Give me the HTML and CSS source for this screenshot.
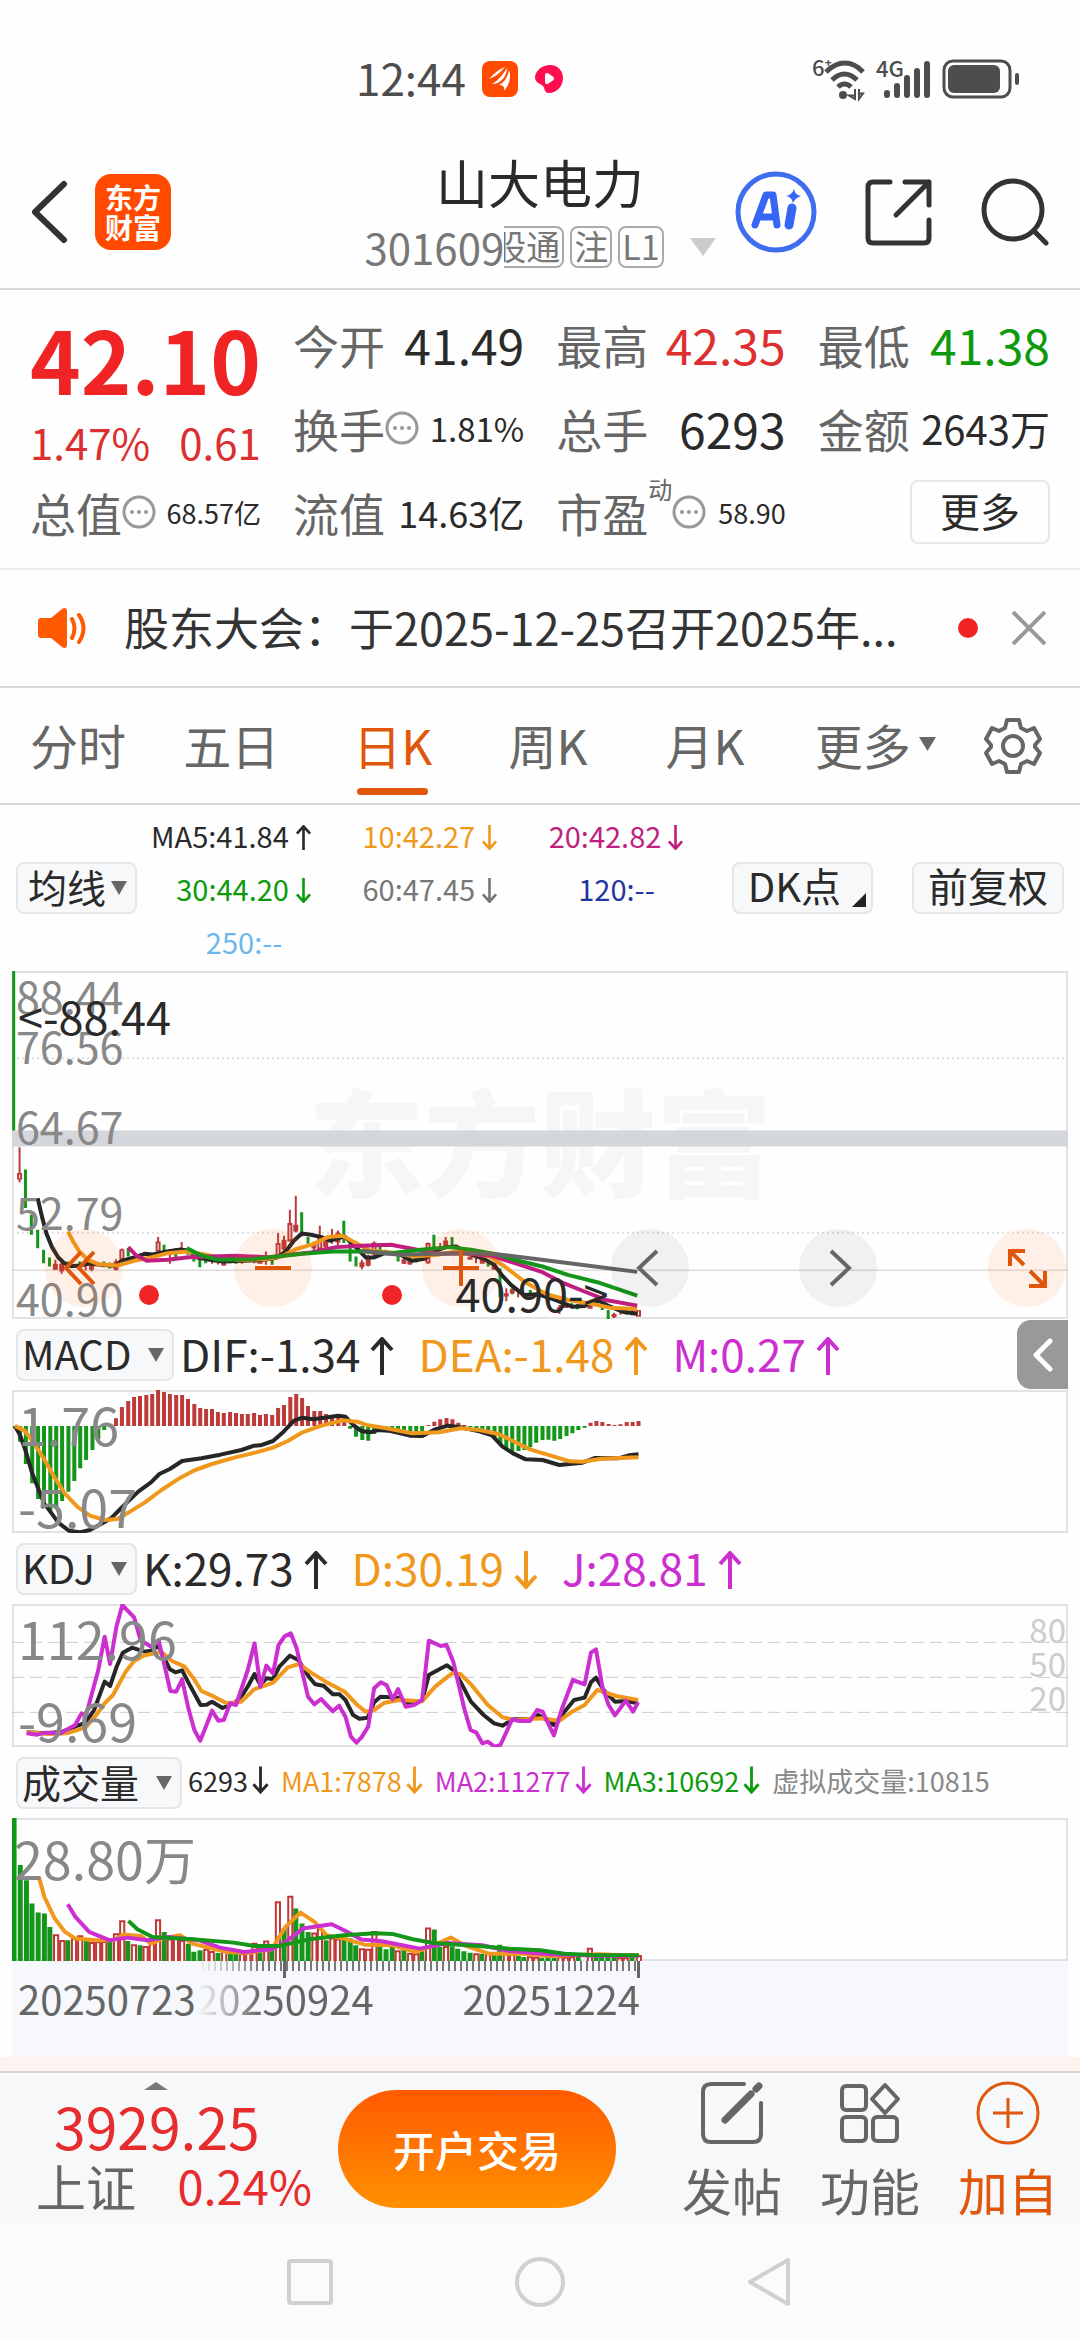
FILE: index.html
```
<!DOCTYPE html>
<html lang="zh-CN">
<head>
    <meta charset="UTF-8">
    <meta name="viewport" content="width=device-width, initial-scale=1.0">
    <title>山大电力 301609</title>
    <link rel="stylesheet" href="styles.css">
</head>
<body>
    <svg class="symbols" width="0" height="0">
        <symbol id="up" viewBox="0 0 24 38"><path d="M12 38V2M2 13L12 2L22 13"/></symbol>
        <symbol id="down" viewBox="0 0 24 38"><path d="M12 0V36M2 25L12 36L22 25"/></symbol>
        <symbol id="dots" viewBox="0 0 34 34">
            <circle cx="17" cy="17" r="15" fill="none" stroke="#999" stroke-width="3"/>
            <circle cx="10" cy="17" r="2" fill="#999"/><circle cx="17" cy="17" r="2" fill="#999"/><circle cx="24" cy="17" r="2" fill="#999"/>
        </symbol>
    </svg>

    <div class="status-bar">
        <div class="status-left">
            <span class="clock">12:44</span>
            <svg class="app-dot" width="36" height="36" viewBox="0 0 36 36">
                <rect width="36" height="36" rx="8" fill="#ff4a00"/>
                <path d="M7 18C11 14 15 9 23 6C19 11 13 16 7 18ZM10 23C17 19 21 13 25 7C25 15 19 23 10 23ZM17 24C23 21 26 15 27 9C30 17 26 26 22 30C23 26 21 24 17 24Z" fill="#fff"/>
            </svg>
            <svg class="app-dot" width="30" height="30" viewBox="0 0 30 30">
                <path d="M16 1C24 1 29 7 29 14C29 22 23 29 15 29C10 29 11 24 9 22C6 19 1 19 1 13C2 6 8 1 16 1Z" fill="#ff0d4e"/>
                <path d="M13 11L18 14.500L13 18Z" fill="#fff" stroke="#fff" stroke-width="4" stroke-linejoin="round"/>
            </svg>
        </div>
        <div class="status-right">
            <svg width="54" height="42" viewBox="0 0 54 42" fill="none" stroke="#4d4d4d">
                <path d="M14 14C26 2 40 2 51 14" stroke-width="5"/>
                <path d="M20 22C28 14 37 14 45 22" stroke-width="5"/>
                <path d="M26 29C30 25 35 25 39 29" stroke-width="5"/>
                <circle cx="31" cy="37" r="4" fill="#4d4d4d" stroke="none"/>
                <path d="M43 31V41L37 37.500H43M47 31V41L51 35.500H47" stroke-width="2"/>
                <text x="0" y="18" class="status-text">6⁺</text>
            </svg>
            <svg width="56" height="42" viewBox="0 0 56 42" fill="none" stroke="#4d4d4d" stroke-width="6" stroke-linecap="round">
                <path d="M11 37V35M21 37V28M31 37V20M41 37V13M51 37V6"/>
                <text x="0" y="19" class="status-text">4G</text>
            </svg>
            <svg width="78" height="40" viewBox="0 0 78 40">
                <rect x="2" y="2" width="66" height="36" rx="9" fill="none" stroke="#4d4d4d" stroke-width="3"/>
                <rect x="6" y="6" width="52" height="28" rx="6" fill="#4d4d4d"/>
                <rect x="73" y="14" width="4" height="12" rx="2" fill="#4d4d4d"/>
            </svg>
        </div>
    </div>

    <header class="header">
        <div class="header-left">
            <button class="icon-button" aria-label="返回">
                <svg width="38" height="64" viewBox="0 0 38 64" fill="none" stroke="#333" stroke-width="6" stroke-linecap="round" stroke-linejoin="round"><path d="M33 4L4 32L33 60"/></svg>
            </button>
            <a class="brand" href="#">东方<br>财富</a>
        </div>
        <div class="stock">
            <h1 class="stock-name">山大电力</h1>
            <div class="stock-code">
                <span>301609</span><span class="tag tag-cut">股通</span><span class="tag">注</span><span class="tag">L1</span>
                <svg class="stock-caret" width="26" height="18" viewBox="0 0 26 18"><path d="M0 0H26L13 18Z" fill="#ccc"/></svg>
            </div>
        </div>
        <div class="header-right">
            <button class="icon-button" aria-label="AI">
                <svg width="82" height="82" viewBox="0 0 82 82">
                    <circle cx="41" cy="41" r="38" fill="none" stroke="#3f6df0" stroke-width="5"/>
                    <path d="M20 54L31 24H38L42 54M24 46H39" fill="none" stroke="#3566f5" stroke-width="7" stroke-linecap="round" stroke-linejoin="round"/>
                    <path d="M57 37L54 54" stroke="#3566f5" stroke-width="9" stroke-linecap="round"/>
                    <path d="M59 18Q60 24 66 25Q60 27 58 32Q57 26 51 25Q57 24 59 18Z" fill="#3566f5"/>
                </svg>
            </button>
            <button class="icon-button" aria-label="分享">
                <svg width="68" height="68" viewBox="0 0 68 68" fill="none" stroke="#333" stroke-width="5" stroke-linecap="round" stroke-linejoin="round">
                    <path d="M25 4H8Q3 4 3 9V60Q3 65 8 65H59Q64 65 64 60V42M40 4H64V27M64 4L31 37"/>
                </svg>
            </button>
            <button class="icon-button" aria-label="搜索">
                <svg width="68" height="68" viewBox="0 0 68 68" fill="none" stroke="#333" stroke-width="5" stroke-linecap="round"><circle cx="32" cy="32" r="29"/><path d="M53 53L65 65"/></svg>
            </button>
        </div>
    </header>

    <section class="quote">
        <div class="quote-main">
            <div class="price">42.10</div>
            <div class="change"><span>1.47%</span><span>0.61</span></div>
        </div>
        <div class="cell"><span class="label">今开</span><span class="value">41.49</span></div>
        <div class="cell"><span class="label">最高</span><span class="value up">42.35</span></div>
        <div class="cell"><span class="label">最低</span><span class="value down">41.38</span></div>
        <div class="cell"><span class="label">换手<svg width="34" height="34"><use href="#dots"/></svg></span><span class="value value-r">1.81%</span></div>
        <div class="cell"><span class="label">总手</span><span class="value">6293</span></div>
        <div class="cell"><span class="label">金额</span><span class="value value-l">2643万</span></div>
        <div class="cell"><span class="label">总值<svg width="34" height="34"><use href="#dots"/></svg></span><span class="value value-s">68.57亿</span></div>
        <div class="cell"><span class="label">流值</span><span class="value value-m">14.63亿</span></div>
        <div class="cell"><span class="label">市盈<sup>动</sup><svg width="34" height="34"><use href="#dots"/></svg></span><span class="value value-s">58.90</span></div>
        <div class="cell cell-end"><button class="more-button">更多</button></div>
    </section>

    <section class="notice">
        <svg width="50" height="42" viewBox="0 0 50 42">
            <path d="M3 11H13L24 2Q29 -1 29 5V37Q29 43 24 40L13 31H3Q0 31 0 28V14Q0 11 3 11Z" fill="#ff5a00"/>
            <path d="M34 12Q39 21 34 31M41 8Q50 21 41 35" fill="none" stroke="#ff5a00" stroke-width="4" stroke-linecap="round"/>
        </svg>
        <a class="notice-text" href="#">股东大会：于2025-12-25召开2025年...</a>
        <span class="red-dot"></span>
        <button class="icon-button" aria-label="关闭">
            <svg width="34" height="34" viewBox="0 0 34 34" stroke="#999" stroke-width="4"><path d="M1 1L33 33M33 1L1 33"/></svg>
        </button>
    </section>

    <nav class="tabs">
        <button class="tab">分时</button>
        <button class="tab">五日</button>
        <button class="tab active">日K</button>
        <button class="tab">周K</button>
        <button class="tab">月K</button>
        <button class="tab">更多<svg width="17" height="14" viewBox="0 0 17 14"><path d="M0 0H17L8.500 14Z" fill="#666"/></svg></button>
        <button class="icon-button" aria-label="设置">
            <svg width="58" height="58" viewBox="0 0 58 58" fill="none" stroke="#666" stroke-width="4" stroke-linejoin="round">
                <path d="M23 3H35L37 11L43 14L50 11L56 22L51 28V30L56 36L50 47L43 44L37 47L35 55H23L21 47L15 44L8 47L2 36L7 30V28L2 22L8 11L15 14L21 11Z"/>
                <circle cx="29" cy="29" r="10"/>
            </svg>
        </button>
    </nav>

    <section class="ma-bar">
        <label class="picker">
            <select class="picker-tight" aria-label="均线"><option>均线</option></select>
            <svg width="16" height="14" viewBox="0 0 16 14"><path d="M0 0H16L8 14Z" fill="#666"/></svg>
        </label>
        <div class="ma-values">
            <span class="ma5">MA5:41.84<svg class="arrow"><use href="#up"/></svg></span>
            <span class="c-orange">10:42.27<svg class="arrow"><use href="#down"/></svg></span>
            <span class="c-magenta">20:42.82<svg class="arrow"><use href="#down"/></svg></span>
            <span class="c-green">30:44.20<svg class="arrow"><use href="#down"/></svg></span>
            <span class="c-gray">60:47.45<svg class="arrow"><use href="#down"/></svg></span>
            <span class="c-navy">120:--</span>
            <span class="c-sky">250:--</span>
        </div>
        <div class="ma-buttons">
            <button class="chip chip-corner">DK点</button>
            <button class="chip">前复权</button>
        </div>
    </section>

    <main class="charts">
        <div class="chart chart-price">
            <div class="watermark">东方财富</div>
            <svg class="plot" viewBox="30 36 2508 1041" preserveAspectRatio="none">
                <path d="M30 297H2538M30 819H2538" stroke="#ddd" stroke-width="2" stroke-dasharray="2 3"/>
                <path d="M30 931H2538" stroke="#ccc" stroke-width="1"/>
                <rect x="30" y="513" width="2508" height="48" fill="#d3d6db"/>
                <path class="s-green" stroke-width="3" d="M34 36V513M62 630V745M76 765V825M91 810V865M105 870V910M119 893V920M162 905V925M191 905V930M248 905V922M262 908V926M306 865V890M391 855V880M419 865V895M448 865V885M462 880V905M476 895V922M490 898V910M548 893V910M562 896V912M648 890V915M718 758V830M733 832V852M818 783V850M833 850V905M847 890V920M904 850V880M918 870V885M947 885V905M990 888V908M1032 825V880M1075 832V865M1090 865V885M1161 900V920M1189 925V1012M1218 985V1003M1261 990V1010M1304 1008V1035M1359 1030V1045M1373 1032V1048M1418 1018V1035M1432 1022V1050M1446 1050V1078M1490 1048V1064"/>
                <path class="s-red" stroke-width="2" d="M48 563V668M133 900V930M148 905V942M205 905V932M219 905V934M277 898V932M291 866V915M377 832V878M405 878V912M433 847V870M505 895V912M519 896V914M533 900V918M576 893V912M605 885V910M633 875V915M662 820V895M676 828V885M690 750V845M704 708V818M747 845V875M761 798V878M775 830V870M790 808V852M804 812V858M861 900V928M876 885V920M890 845V895M961 885V912M975 890V915M1018 848V912M1047 850V872M1060 832V865M1132 892V910M1204 985V1024M1232 988V1012M1330 1035V1062M1460 1058V1074M1475 1046V1064"/>
                <path class="s-red" stroke-width="5" d="M48 640V660M133 912V930M148 912V935M219 915V930M277 905V930M291 868V900M377 845V875M533 905V917M605 892V903M619 898V912M662 850V890M676 840V870M690 790V845M704 795V815M747 852V866M761 826V870M775 842V862M804 818V848M861 907V922M876 893V918M890 848V885M961 898V912M975 900V914M1018 850V910M1060 842V858M1118 890V900M1147 898V912M1175 910V930M1204 1000V1010M1218 988V1000M1330 1042V1052M1345 1030V1044M1403 1030V1046M1460 1062V1072M1504 1050V1066M1518 1050V1070"/>
                <path stroke="#fff" stroke-width="1" d="M48 645V656M291 873V895M377 850V870M662 855V885M690 796V838M761 832V863M890 853V880M1018 855V905M1518 1054V1066"/>
                <polyline class="s-black" points="91,716 101,770 112,822 125,862 140,893 155,911 170,919 190,917 215,911 240,915 275,918 290,903 320,893 345,882 365,884 395,876 430,869 450,873 470,893 500,900 530,905 580,903 620,901 660,893 680,875 700,842 718,821 740,825 765,832 785,843 820,830 845,860 870,893 890,893 915,880 945,880 980,903 1010,897 1035,873 1060,862 1085,860 1110,880 1150,897 1175,915 1195,948 1215,975 1245,1005 1280,1003 1320,1020 1360,1040 1390,1038 1420,1020 1445,1037 1480,1055 1515,1061"/>
                <polyline class="s-orange" points="163,815 175,845 190,875 210,900 235,913 280,917 320,903 360,893 400,880 445,875 485,883 520,893 570,900 630,898 670,890 705,868 745,853 780,832 815,828 840,845 880,872 930,878 985,890 1040,885 1085,875 1120,880 1165,890 1200,920 1250,968 1300,1003 1350,1020 1400,1030 1450,1043 1515,1047"/>
                <polyline class="s-magenta" points="306,862 325,887 350,903 400,900 450,892 500,890 560,888 640,892 690,885 740,878 800,862 860,858 930,855 980,867 1040,882 1100,880 1170,888 1230,912 1290,937 1340,970 1400,1000 1440,1020 1515,1037"/>
                <polyline class="s-green" points="445,865 480,887 520,900 600,898 660,890 720,882 790,875 870,875 930,880 1000,870 1070,862 1120,870 1180,883 1230,902 1290,920 1350,945 1420,967 1515,1007"/>
                <polyline class="s-gray" points="860,873 950,885 1050,882 1130,880 1180,883 1340,908 1515,936"/>
            </svg>
            <div class="price-axis">
                <span>88.44</span><span>76.56</span><span>64.67</span><span>52.79</span><span>40.90</span>
            </div>
            <span class="mark mark-high">&lt;-88.44</span>
            <div class="chart-tools">
                <button class="tool" aria-label="更早"><svg width="40" height="40" viewBox="0 0 40 40"><path d="M17 4L2 20L17 36M30 4L15 20L30 36"/></svg></button>
                <button class="tool" aria-label="缩小"><svg width="40" height="40" viewBox="0 0 40 40"><path d="M2 20H38"/></svg></button>
                <button class="tool" aria-label="放大"><svg width="40" height="40" viewBox="0 0 40 40"><path d="M2 20H38M20 2V38"/></svg></button>
                <button class="tool tool-gray" aria-label="上一个"><svg width="40" height="40" viewBox="0 0 40 40"><path d="M27 3L9 20L27 37"/></svg></button>
                <button class="tool tool-gray" aria-label="下一个"><svg width="40" height="40" viewBox="0 0 40 40"><path d="M13 3L31 20L13 37"/></svg></button>
                <button class="tool" aria-label="全屏"><svg width="40" height="40" viewBox="0 0 40 40"><path d="M3 18V3H18M3 3L17 17M38 23V38H22M38 38L23 23"/></svg></button>
            </div>
            <i class="red-dot event event-1"></i>
            <i class="red-dot event event-2"></i>
            <span class="mark mark-low">40.90-&gt;</span>
        </div>

        <div class="indicator">
            <label class="picker">
                <select aria-label="指标"><option>MACD</option></select>
                <svg width="16" height="14" viewBox="0 0 16 14"><path d="M0 0H16L8 14Z" fill="#666"/></svg>
            </label>
            <span>DIF:-1.34<svg class="arrow"><use href="#up"/></svg></span>
            <span class="c-orange">DEA:-1.48<svg class="arrow"><use href="#up"/></svg></span>
            <span class="c-purple">M:0.27<svg class="arrow"><use href="#up"/></svg></span>
            <button class="drawer" aria-label="展开">
                <svg width="20" height="34" viewBox="0 0 20 34" fill="none" stroke="#fff" stroke-width="5" stroke-linecap="round" stroke-linejoin="round"><path d="M17 3L3 17L17 31"/></svg>
            </button>
        </div>
        <div class="chart chart-sub">
            <svg class="plot" viewBox="30 240 2508 429" preserveAspectRatio="none">
                <path class="s-green" stroke-width="4" d="M37 348V355M49 348V395M63 348V462M78 348V520M92 348V567M106 348V590M121 348V605M135 348V590M149 348V573M164 348V545M178 348V513M192 348V475M206 348V450M221 348V420M235 348V388M249 348V360M263 348V352M833 348V356M847 348V380M862 348V390M876 348V392M890 348V372M904 348V366M919 348V366M933 348V368M947 348V372M961 348V375M976 348V376M990 348V376M1004 348V368M1119 348V351M1133 348V356M1147 348V366M1161 348V375M1176 348V384M1190 348V405M1204 348V420M1218 348V425M1233 348V423M1247 348V420M1261 348V412M1275 348V398M1290 348V390M1304 348V389M1318 348V392M1332 348V387M1347 348V378M1361 348V370M1375 348V360M1390 348V353"/>
                <path class="s-red" stroke-width="4" d="M277 348V325M291 348V291M306 348V273M320 348V261M334 348V258M349 348V255M363 348V252M377 348V240M391 348V246M405 348V252M420 348V255M434 348V255M448 348V267M463 348V282M477 348V294M491 348V297M505 348V297M519 348V306M533 348V309M548 348V306M562 348V309M576 348V312M590 348V312M605 348V309M619 348V315M633 348V312M648 348V315M662 348V294M676 348V285M691 348V261M705 348V252M719 348V264M733 348V288M748 348V303M762 348V303M776 348V312M790 348V318M805 348V320M819 348V325M1019 348V345M1033 348V335M1047 348V328M1062 348V324M1076 348V328M1090 348V338M1104 348V345M1404 348V338M1418 348V333M1432 348V336M1447 348V342M1461 348V345M1475 348V343M1490 348V336M1504 348V336M1518 348V333"/>
                <polyline class="s-black" points="37,348 49,375 63,425 78,490 92,535 106,580 121,605 140,638 165,662 190,667 215,660 240,643 265,625 285,600 305,575 330,545 360,517 380,492 405,477 434,453 480,445 525,434 575,420 605,407 620,406 650,393 675,365 700,332 720,323 745,328 780,322 805,317 822,320 840,345 860,363 880,367 900,360 930,363 975,377 1005,378 1035,358 1065,347 1095,352 1140,364 1170,376 1195,410 1220,430 1250,448 1290,450 1330,465 1385,458 1415,444 1470,445 1495,436 1518,433"/>
                <polyline class="s-orange" points="37,348 60,362 80,395 105,445 130,500 155,550 185,590 215,617 250,630 280,627 310,605 345,578 385,540 430,503 465,480 505,462 560,442 610,427 650,413 685,393 720,367 765,347 815,331 850,335 875,346 920,355 980,370 1045,367 1095,355 1140,360 1185,372 1220,393 1260,418 1310,437 1355,454 1385,455 1430,446 1518,442"/>
            </svg>
            <div class="sub-axis"><span>1.76</span><span>-5.07</span></div>
        </div>

        <div class="indicator">
            <label class="picker">
                <select aria-label="指标"><option>KDJ</option></select>
                <svg width="16" height="14" viewBox="0 0 16 14"><path d="M0 0H16L8 14Z" fill="#666"/></svg>
            </label>
            <span>K:29.73<svg class="arrow"><use href="#up"/></svg></span>
            <span class="c-orange">D:30.19<svg class="arrow"><use href="#down"/></svg></span>
            <span class="c-purple">J:28.81<svg class="arrow"><use href="#up"/></svg></span>
        </div>
        <div class="chart chart-sub">
            <svg class="plot" viewBox="30 222 2508 429" preserveAspectRatio="none">
                <path d="M30 337H2538M30 442H2538M30 547H2538" stroke="#ccc" stroke-width="1" stroke-dasharray="12 6"/>
                <polyline class="s-black" points="65,607 110,610 150,605 180,590 205,578 225,540 250,455 263,468 278,412 293,368 315,353 345,365 360,362 378,348 392,385 405,418 418,427 434,421 450,460 478,525 492,524 505,515 530,534 560,518 580,490 592,465 606,432 620,465 634,445 650,447 665,410 690,377 710,390 735,440 750,463 770,467 792,493 808,493 822,510 840,555 855,566 875,563 890,517 905,500 930,502 950,503 970,522 1004,512 1020,435 1045,418 1063,406 1080,422 1098,462 1120,515 1150,555 1175,580 1195,587 1220,568 1260,568 1280,555 1300,570 1317,585 1340,548 1365,510 1390,503 1405,457 1417,443 1435,480 1462,515 1490,513 1517,520"/>
                <polyline class="s-orange" points="65,607 120,612 160,610 205,592 230,555 250,520 270,495 300,425 320,393 345,376 385,366 410,393 440,410 460,443 480,483 510,500 540,520 575,515 605,478 650,458 685,412 712,402 740,428 775,455 820,485 850,525 870,545 890,540 915,518 950,510 1004,514 1035,470 1075,430 1095,432 1120,463 1160,525 1195,562 1225,570 1290,565 1330,573 1360,545 1390,525 1420,480 1465,498 1517,510"/>
                <polyline class="s-purple" points="65,610 90,614 110,608 145,610 180,585 195,550 206,555 235,420 250,320 263,402 278,290 292,225 320,262 335,330 360,350 378,330 392,405 406,483 420,485 434,448 448,530 463,600 477,632 492,585 505,542 520,572 533,570 548,520 562,525 590,420 606,340 620,470 634,407 650,430 663,345 678,318 692,310 706,355 733,500 748,523 764,507 792,544 807,527 822,560 835,620 848,638 860,622 876,590 890,475 906,457 920,466 934,508 947,477 965,530 985,525 1004,510 1020,332 1048,348 1062,345 1078,395 1105,540 1119,600 1133,608 1147,640 1160,635 1176,650 1190,645 1218,568 1235,573 1260,573 1277,540 1290,545 1317,616 1335,540 1362,450 1390,463 1405,368 1417,358 1432,470 1447,525 1462,556 1488,512 1505,545 1517,517"/>
            </svg>
            <div class="sub-axis"><span>112.96</span><span>-9.69</span></div>
            <div class="right-axis"><span>80</span><span>50</span><span>20</span></div>
        </div>

        <div class="indicator indicator-volume">
            <label class="picker">
                <select class="picker-tight" aria-label="指标"><option>成交量</option></select>
                <svg width="16" height="14" viewBox="0 0 16 14"><path d="M0 0H16L8 14Z" fill="#666"/></svg>
            </label>
            <span>6293<svg class="arrow"><use href="#down"/></svg></span>
            <span class="c-orange">MA1:7878<svg class="arrow"><use href="#down"/></svg></span>
            <span class="c-purple">MA2:11277<svg class="arrow"><use href="#down"/></svg></span>
            <span class="c-green">MA3:10692<svg class="arrow"><use href="#down"/></svg></span>
            <span class="c-light">虚拟成交量:10815</span>
        </div>
        <div class="chart chart-sub">
            <svg class="plot" viewBox="18 204 1533 428" preserveAspectRatio="none">
                <path class="s-green" stroke-width="5" d="M21 632V204M30 632V345M39 632V390M47 632V460M56 632V487M65 632V490M73 632V530M99 632V570M126 632V570M160 632V570M186 632V572M204 632V585M239 632V545M274 632V580M282 632V604M291 632V600M317 632V608M335 632V605M343 632V608M378 632V592M395 632V585M413 632V535M430 632V475M439 632V520M448 632V545M474 632V570M500 632V555M509 632V565M517 632V585M552 632V585M561 632V597M570 632V590M587 632V600M613 632V600M631 632V538M639 632V590M657 632V588M665 632V595M674 632V603M683 632V607M700 632V610M718 632V607M726 632V583M753 632V617M761 632V620M787 632V622M796 632V620M805 632V622M840 632V615M866 632V612M874 632V610M883 632V608M892 632V616M918 632V620"/>
                <path class="bars-red" d="M79 632V555H85V632M88 632V572H94V632M105 632V567H111V632M114 632V558H120V632M131 632V578H137V632M140 632V576H146V632M149 632V575H155V632M166 632V552H172V632M175 632V513H181V632M192 632V585H198V632M209 632V590H215V632M218 632V572H224V632M227 632V510H233V632M244 632V568H250V632M253 632V565H259V632M262 632V572H268V632M297 632V598H303V632M305 632V605H311V632M323 632V605H329V632M349 632V612H355V632M358 632V608H364V632M367 632V580H373V632M384 632V574H390V632M401 632V456H407V632M419 632V440H425V632M454 632V550H460V632M462 632V537H468V632M480 632V565H486V632M488 632V568H494V632M523 632V597H529V632M532 632V598H538V632M541 632V545H547V632M575 632V603H581V632M593 632V610H599V632M602 632V612H608V632M619 632V535H625V632M645 632V590H651V632M689 632V612H695V632M706 632V612H712V632M732 632V612H738V632M741 632V612H747V632M767 632V621H773V632M776 632V622H782V632M811 632V621H817V632M819 632V622H825V632M828 632V621H834V632M854 632V595H860V632M897 632V624H903V632M906 632V624H912V632M925 632V617H931V632"/>
                <polyline class="s-orange" points="57,380 65,440 80,505 95,545 110,565 140,570 165,570 180,553 205,557 220,580 240,563 262,555 280,580 300,590 330,605 360,608 395,597 415,530 437,487 457,515 475,555 500,565 530,583 570,585 605,605 630,585 655,562 675,585 710,610 760,610 800,617 870,612 928,616"/>
                <polyline class="s-purple" points="99,462 110,500 130,545 160,570 185,562 215,570 245,560 290,570 320,592 355,605 395,597 415,575 440,535 482,522 500,540 525,568 555,573 610,595 650,578 700,585 740,602 800,612 870,616 928,616"/>
                <polyline class="s-green" points="187,512 200,537 222,560 280,567 340,577 370,587 405,587 450,567 500,555 545,549 570,551 600,567 630,578 700,588 740,595 785,600 820,610 860,614 928,615"/>
            </svg>
            <div class="sub-axis volume-axis"><span>28.80万</span></div>
        </div>
        <div class="dates">
            <div class="date-range">
                <div class="ticks"></div>
                <span>20250924</span>
                <span>20251224</span>
            </div>
            <span class="date-start">20250723</span>
        </div>
    </main>

    <div class="divider"></div>

    <footer class="footer">
        <div class="index">
            <svg class="index-caret" width="24" height="8" viewBox="0 0 24 8"><path d="M0 8H24L12 0Z" fill="#777"/></svg>
            <div class="index-value">3929.25</div>
            <div class="index-row"><span class="index-name">上证</span><span class="index-change">0.24%</span></div>
        </div>
        <button class="trade">开户交易</button>
        <div class="actions">
            <button class="action">
                <svg width="64" height="64" viewBox="0 0 64 64" fill="none" stroke="#666" stroke-width="4" stroke-linecap="round">
                    <path d="M44 3H11Q3 3 3 11V53Q3 61 11 61H53Q61 61 61 53V22"/>
                    <path d="M25 39L51 13" stroke-width="7"/><path d="M56 8L59 5" stroke-width="7"/>
                </svg>
                发帖
            </button>
            <button class="action">
                <svg width="64" height="64" viewBox="0 0 64 64" fill="none" stroke="#666" stroke-width="4" stroke-linejoin="round">
                    <rect x="4" y="5" width="24" height="24" rx="4"/><rect x="4" y="36" width="24" height="24" rx="4"/><rect x="35" y="36" width="24" height="24" rx="4"/>
                    <path d="M47 4L60 18L47 32L34 18Z"/>
                </svg>
                功能
            </button>
            <button class="action action-add">
                <svg width="64" height="64" viewBox="0 0 64 64" fill="none" stroke="#e0560b" stroke-width="3"><circle cx="32" cy="32" r="30"/><path d="M17 32H47M32 17V47"/></svg>
                加自
            </button>
        </div>
    </footer>

    <div class="system-nav">
        <button class="icon-button" aria-label="最近任务"><svg width="50" height="50" viewBox="0 0 50 50"><rect x="4" y="4" width="42" height="42" rx="2"/></svg></button>
        <button class="icon-button" aria-label="主屏幕"><svg width="50" height="50" viewBox="0 0 50 50"><circle cx="25" cy="25" r="23"/></svg></button>
        <button class="icon-button" aria-label="系统返回"><svg width="50" height="50" viewBox="0 0 50 50"><path d="M43 3V47L5 25Z"/></svg></button>
    </div>
</body>
</html>
```
FILE: styles.css
```
* {
    box-sizing: border-box;
}
body {
    margin: 0;
    font-family: "Noto Sans CJK SC", "Noto Sans", sans-serif;
    line-height: 1;
    color: #2a2a2a;
    background-color: #fefefe;
}
svg {
    display: block;
    flex: none;
}
button, select {
    font: inherit;
    color: inherit;
    border: none;
    background: none;
    padding: 0;
    margin: 0;
    cursor: pointer;
}
a {
    color: inherit;
    text-decoration: none;
}
.symbols {
    position: absolute;
}

/* status bar */
.status-bar {
    display: flex;
    justify-content: space-between;
    align-items: center;
    height: 136px;
    padding: 22px 60px 0 356px;
}
.status-left, .status-right {
    display: flex;
    align-items: center;
}
.status-left {
    gap: 16px;
}
.status-right {
    gap: 10px;
}
.status-right svg {
    overflow: visible;
}
.clock {
    padding-bottom: 4px;
    font-size: 44px;
    color: #4d4d4d;
}
.status-text {
    font-size: 22px;
    font-weight: 500;
    fill: #4d4d4d;
    stroke: none;
}

/* header */
.header {
    display: grid;
    grid-template-columns: 1fr auto 1fr;
    align-items: center;
    height: 154px;
    padding: 0 31px;
    border-bottom: 2px solid #d8d8d8;
}
.header-left, .header-right {
    display: flex;
    align-items: center;
}
.header-left {
    gap: 26px;
}
.header-right {
    justify-content: flex-end;
    gap: 48px;
}
.brand {
    width: 76px;
    padding: 8px 0;
    border-radius: 16px;
    background-color: #ff4a00;
    color: #fff;
    font-size: 28px;
    font-weight: bold;
    line-height: 30px;
    text-align: center;
}
.stock-name {
    margin: 0 0 18px;
    font-size: 52px;
    font-weight: normal;
    text-align: center;
}
.stock-code {
    display: flex;
    align-items: center;
    font-size: 42px;
    color: #777;
}
.tag {
    height: 42px;
    margin-right: 6px;
    padding: 0 2px;
    border: 2px solid #aaa;
    border-radius: 8px;
    font-size: 34px;
    line-height: 36px;
    text-align: center;
    white-space: nowrap;
}
.tag-cut {
    display: flex;
    justify-content: flex-end;
    width: 60px;
    overflow: hidden;
    border-left: none;
    border-radius: 0 8px 8px 0;
}
.stock-caret {
    margin-left: 20px;
}

/* quote */
.quote {
    display: grid;
    grid-template-columns: 225fr 232fr 230fr 233fr;
    grid-auto-rows: 84px;
    column-gap: 32px;
    padding: 12px 30px 14px;
    border-bottom: 2px solid #eee;
}
.quote-main {
    grid-row: span 2;
}
.price {
    font-size: 86px;
    font-weight: bold;
    line-height: 112px;
    color: #f02424;
    white-space: nowrap;
}
.change {
    display: flex;
    justify-content: space-between;
    font-size: 42px;
    line-height: 56px;
    color: #dc2f2f;
}
.cell {
    display: flex;
    justify-content: space-between;
    align-items: center;
    white-space: nowrap;
}
.cell-end {
    justify-content: flex-end;
}
.label {
    display: flex;
    align-items: center;
    font-size: 46px;
    color: #666;
}
.label sup {
    align-self: flex-start;
    margin-top: -12px;
    font-size: 24px;
    line-height: 24px;
}
.value {
    font-size: 48px;
}
.value-l {
    font-size: 40px;
}
.value-m {
    font-size: 36px;
}
.value-r {
    font-size: 33px;
}
.value-s {
    font-size: 27px;
}
.up {
    color: #dc2f2f;
}
.down {
    color: #0d9a0d;
}
.more-button {
    padding: 8px 28px 12px;
    border: 2px solid #e6e8e8;
    border-radius: 8px;
    font-size: 40px;
}

/* notice */
.notice {
    display: flex;
    align-items: center;
    height: 118px;
    padding: 0 34px 0 38px;
    border-bottom: 2px solid #d8d8d8;
}
.notice-text {
    flex: 1;
    margin-left: 36px;
    padding-bottom: 4px;
    font-size: 45px;
    color: #333;
    white-space: nowrap;
}
.red-dot {
    width: 20px;
    height: 20px;
    border-radius: 50%;
    background-color: #f02424;
}
.notice .red-dot {
    margin-right: 34px;
}

/* tabs */
.tabs {
    display: grid;
    grid-template-columns: 153fr 170fr 155fr 157fr 149fr 169fr 66fr;
    align-items: stretch;
    justify-items: start;
    height: 117px;
    padding: 0 30px;
    border-bottom: 2px solid #d8d8d8;
}
.tab {
    display: flex;
    align-items: center;
    gap: 8px;
    padding-bottom: 4px;
    font-size: 48px;
    color: #666;
    white-space: nowrap;
}
.tab.active {
    position: relative;
    color: #e0560b;
}
.tab.active::after {
    content: "";
    position: absolute;
    left: 4px;
    right: 4px;
    bottom: 8px;
    height: 7px;
    border-radius: 4px;
    background-color: #e0560b;
}

/* moving averages */
.ma-bar {
    display: flex;
    align-items: center;
    height: 166px;
    padding: 0 16px;
}
.ma-values {
    display: grid;
    grid-template-columns: repeat(3, 1fr);
    grid-auto-rows: 53px;
    flex: 1;
    align-items: center;
    justify-items: center;
    margin: 0 22px 0 14px;
    font-size: 29px;
    line-height: 40px;
    white-space: nowrap;
}
.ma5 {
    justify-self: start;
}
.ma-buttons {
    display: flex;
    gap: 39px;
}
.chip, .picker {
    height: 52px;
    border: 2px solid #e4e6ea;
    border-radius: 8px;
    background-color: #f7f8fa;
    font-size: 40px;
}
.chip {
    position: relative;
    padding: 0 14px 6px;
    line-height: 40px;
    white-space: nowrap;
}
.chip-corner {
    padding-right: 30px;
}
.chip-corner::after {
    content: "";
    position: absolute;
    right: 5px;
    bottom: 5px;
    border-left: 14px solid transparent;
    border-bottom: 14px solid #222;
}
.picker {
    display: flex;
    align-items: center;
    flex: none;
    padding: 0 8px 0 4px;
}
.picker select {
    appearance: none;
    height: 48px;
    padding: 0 16px 4px 0;
    line-height: 44px;
}
.picker select.picker-tight {
    font-size: 39px;
}
.ma-bar .picker select {
    padding-right: 4px;
    padding-left: 6px;
}
.arrow {
    display: inline-block;
    width: 17px;
    height: 25px;
    margin-left: 6px;
    vertical-align: -2px;
    fill: none;
    stroke: currentColor;
    stroke-width: 4;
}
.c-orange { color: #f0981c; }
.c-magenta { color: #c01f80; }
.c-green { color: #0d9a0d; }
.c-gray { color: #777; }
.c-navy { color: #2236a0; }
.c-sky { color: #6db8ea; }
.c-purple { color: #cc2fcf; }
.c-light { color: #888; }

/* charts */
.charts {
    margin: 0 12px;
}
.chart {
    position: relative;
    box-shadow: inset 0 0 0 2px #e2e2e2;
}
.chart-price {
    height: 348px;
}
.chart-sub {
    height: 143px;
}
.plot {
    width: 100%;
    height: 100%;
    position: relative;
}
.plot path, .plot polyline {
    fill: none;
    vector-effect: non-scaling-stroke;
}
.plot polyline {
    stroke-width: 4px;
    stroke-linejoin: round;
}
.s-green { stroke: #14961a; }
.s-red { stroke: #bd3a3a; }
.s-black { stroke: #262626; }
.s-orange { stroke: #f0981c; }
.s-magenta { stroke: #c01f80; }
.s-purple { stroke: #cc2fcf; }
.s-gray { stroke: #666; }
.plot .bars-red {
    fill: #fff;
    stroke: #c23636;
    stroke-width: 2px;
}
.watermark {
    position: absolute;
    top: 108px;
    left: 0;
    right: 0;
    text-align: center;
    font-size: 116px;
    font-weight: 900;
    color: #f6f6f6;
}
.price-axis {
    position: absolute;
    top: 0;
    bottom: 0;
    left: 4px;
    display: grid;
    grid-template-rows: 46px 50px 80px 86px 1fr;
    align-items: end;
    font-size: 43px;
    color: #888;
}
.mark {
    position: absolute;
    font-size: 45px;
}
.mark-high {
    top: 22px;
    left: 6px;
}
.mark-low {
    left: 42%;
    bottom: 4px;
}
.chart-tools {
    position: absolute;
    left: 33px;
    right: 2px;
    bottom: 12px;
    display: flex;
    justify-content: space-between;
}
.tool {
    display: flex;
    align-items: center;
    justify-content: center;
    width: 78px;
    height: 78px;
    border-radius: 50%;
    background-color: rgba(255, 90, 0, 0.09);
}
.tool svg {
    fill: none;
    stroke: #e0560b;
    stroke-width: 4;
}
.tool-gray {
    background-color: rgba(0, 0, 0, 0.05);
}
.tool-gray svg {
    stroke: #666;
}
.event {
    position: absolute;
    bottom: 14px;
}
.event-1 {
    left: 12%;
}
.event-2 {
    left: 35%;
}
.indicator {
    position: relative;
    display: flex;
    align-items: center;
    gap: 24px;
    height: 71px;
    padding-left: 4px;
    font-size: 44px;
    white-space: nowrap;
}
.indicator .picker {
    margin-right: -18px;
}
.indicator > span {
    padding-bottom: 4px;
    line-height: 50px;
}
.indicator .arrow {
    width: 24px;
    height: 38px;
    margin-left: 10px;
    vertical-align: -3px;
}
.drawer {
    position: absolute;
    top: 1px;
    right: 0;
    display: flex;
    align-items: center;
    justify-content: center;
    width: 51px;
    height: 69px;
    border-radius: 14px 0 0 14px;
    background-color: #999;
}
.indicator-volume {
    gap: 12px;
    font-size: 27px;
}
.indicator-volume .picker {
    margin-right: -6px;
}
.indicator-volume .arrow {
    width: 17px;
    height: 30px;
    margin-left: 4px;
}
.sub-axis {
    position: absolute;
    top: 8px;
    left: 6px;
    display: flex;
    flex-direction: column;
    gap: 30px;
    font-size: 52px;
    color: #888;
}
.sub-axis.volume-axis {
    top: 14px;
    left: 2px;
}
.right-axis {
    position: absolute;
    top: 8px;
    right: 2px;
    font-size: 33px;
    line-height: 34px;
    color: #ccc;
}
.right-axis span {
    display: block;
}
.dates {
    position: relative;
    height: 96px;
    background-color: #f7f8fb;
    font-size: 40px;
    color: #666;
}
.date-range {
    display: flex;
    flex-wrap: wrap;
    align-content: flex-start;
    justify-content: space-between;
    width: 628px;
    padding-left: 184px;
    mask-image: linear-gradient(to right, transparent 186px, #000 250px);
}
.ticks {
    width: 100%;
    height: 17px;
    background:
        linear-gradient(#666, #666) 87px 0 / 3px 100% no-repeat,
        linear-gradient(#666, #666) 100% 0 / 3px 100% no-repeat,
        repeating-linear-gradient(to right, #777 0 2px, transparent 2px 6px) 0 0 / 100% 10px no-repeat;
}
.date-start {
    position: absolute;
    top: 17px;
    left: 6px;
}
.divider {
    height: 14px;
    background-color: #fef3ee;
}

/* footer */
.footer {
    display: flex;
    align-items: center;
    height: 153px;
    padding: 0 22px 0 36px;
    border-top: 2px solid #d8d4d4;
    background-color: #f7f8fa;
}
.index {
    width: 276px;
    padding-bottom: 6px;
}
.index-caret {
    margin-left: 108px;
}
.index-value {
    padding-left: 18px;
    font-size: 57px;
    line-height: 70px;
    color: #e62c2c;
}
.index-row {
    display: flex;
    align-items: center;
    justify-content: space-between;
    font-size: 50px;
    line-height: 50px;
}
.index-name {
    color: #666;
}
.index-change {
    font-size: 47px;
    color: #e62c2c;
}
.trade {
    width: 278px;
    height: 118px;
    margin-left: 26px;
    border-radius: 59px;
    background: linear-gradient(#ff5a00, #ff9000);
    color: #fff;
    font-size: 42px;
    font-weight: 500;
}
.actions {
    display: flex;
    flex: 1;
    justify-content: flex-end;
    gap: 38px;
}
.action {
    display: flex;
    flex-direction: column;
    align-items: center;
    gap: 16px;
    font-size: 50px;
    line-height: 56px;
    color: #666;
}
.action-add {
    color: #e0560b;
}
.system-nav {
    display: flex;
    justify-content: center;
    align-items: center;
    gap: 180px;
    height: 115px;
    background-color: #fbfbfc;
}
.system-nav svg {
    fill: none;
    stroke: #d0d0d0;
    stroke-width: 4;
    stroke-linejoin: round;
}
```
